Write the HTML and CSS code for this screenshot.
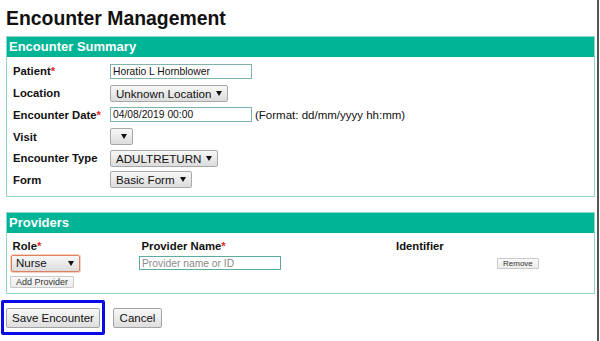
FILE: index.html
```html
<!DOCTYPE html>
<html lang="en">
<head>
<meta charset="utf-8">
<title>Encounter Management</title>
<link rel="stylesheet" href="styles.css">
</head>
<body>
<div class="page">
  <h1 class="title">Encounter Management</h1>

  <section class="panel">
    <div class="panel-head">Encounter Summary</div>
    <div class="summary-grid">
      <div class="label">Patient<span class="req">*</span></div>
      <div class="field"><input class="text-input" type="text" value="Horatio L Hornblower"></div>

      <div class="label">Location</div>
      <div class="field"><span class="select">Unknown Location<span class="caret"></span></span></div>

      <div class="label">Encounter Date<span class="req">*</span></div>
      <div class="field"><input class="text-input" type="text" value="04/08/2019 00:00"><span class="hint">(Format: dd/mm/yyyy hh:mm)</span></div>

      <div class="label">Visit</div>
      <div class="field"><span class="select"><span class="caret"></span></span></div>

      <div class="label">Encounter Type</div>
      <div class="field"><span class="select">ADULTRETURN<span class="caret"></span></span></div>

      <div class="label">Form</div>
      <div class="field"><span class="select">Basic Form<span class="caret"></span></span></div>
    </div>
  </section>

  <section class="panel">
    <div class="panel-head">Providers</div>
    <div class="prov-grid">
      <div class="prov-label l-role">Role<span class="req">*</span></div>
      <div class="prov-label l-name">Provider Name<span class="req">*</span></div>
      <div class="prov-label">Identifier</div>
      <div></div>

      <div class="r2"><span class="select select-role">Nurse<span class="caret"></span></span></div>
      <div class="r2"><input class="text-input" type="text" placeholder="Provider name or ID"></div>
      <div></div>
      <div class="r2"><button class="btn-sm" type="button">Remove</button></div>

      <div class="r3"><button class="btn-sm add" type="button">Add Provider</button></div>
    </div>
  </section>

  <div class="actions">
    <span class="focus-ring"><button class="btn" type="button">Save Encounter</button></span>
    <button class="btn cancel" type="button">Cancel</button>
  </div>
</div>
</body>
</html>
```

FILE: styles.css
```css
* { box-sizing: border-box; }

body {
  margin: 0;
  background: #fff;
  color: #111;
  font-family: "Liberation Sans", Arial, sans-serif;
}

.page {
  width: 599px;
  min-height: 341px;
  border-right: 2px solid #555;
  padding: 7px 2px 0 6px;
}

.title {
  margin: 0 0 6px;
  font-size: 19.4px;
  line-height: 23px;
  font-weight: bold;
  color: #111;
}

.panel {
  border: 1px solid #93d6c4;
}

.panel + .panel {
  margin-top: 15px;
}

.panel-head {
  height: 20px;
  line-height: 20px;
  padding-left: 2px;
  background: #00b496;
  color: #fff;
  font-weight: bold;
  font-size: 13px;
}

.summary-grid {
  display: grid;
  grid-template-columns: 97px 1fr;
  grid-auto-rows: 21.7px;
  align-items: center;
  padding: 3.6px 0 5.2px 6px;
}

.label {
  font-weight: bold;
  font-size: 11.3px;
}

.req {
  color: #e3262a;
}

.field {
  display: flex;
  align-items: center;
}

.text-input {
  width: 142px;
  height: 15px;
  margin: 0;
  padding: 0 2px;
  border: 1px solid #7fb3ad;
  background: #fff;
  color: #111;
  font: 10.3px "Liberation Sans", Arial, sans-serif;
  outline: none;
}

.prov-grid .text-input {
  height: 14px;
  border-color: #5ea9a0;
}

.text-input::placeholder {
  color: #8a8a8a;
}

.hint {
  margin-left: 3px;
  font-size: 11.5px;
}

.select {
  display: inline-flex;
  align-items: center;
  height: 17px;
  padding: 0 5px 0 5px;
  border: 1px solid #a8a8a8;
  border-radius: 2px;
  background: linear-gradient(#f7f7f7, #dcdcdc);
  color: #111;
  font-size: 11.6px;
}

.caret {
  width: 0;
  height: 0;
  margin-left: 5px;
  border-left: 3px solid transparent;
  border-right: 3px solid transparent;
  border-top: 5.5px solid #111;
}

.select-role {
  width: 69px;
  padding-left: 4px;
  justify-content: space-between;
  border-color: #e0805f;
  box-shadow: 0 0 0 1px rgba(236, 150, 120, 0.45);
  font-size: 11.5px;
}

.prov-grid {
  display: grid;
  grid-template-columns: 128px 257px 101px 1fr;
  grid-template-rows: 20px 19px 16px;
  padding: 0 0 5px 4px;
}

.prov-label {
  padding-top: 6px;
  line-height: 14px;
  font-weight: bold;
  font-size: 11.3px;
}

.l-role { padding-left: 1.5px; }
.l-name { padding-left: 2.5px; }

.r2 {
  align-self: center;
  margin-top: 2px;
  display: flex;
}

.r3 {
  align-self: end;
  display: flex;
}

.btn-sm {
  height: 11.5px;
  margin: 0;
  padding: 0 5px;
  border: 1px solid #c9c9c9;
  border-radius: 1px;
  background: linear-gradient(#fafafa, #ececec);
  color: #333;
  font: 8px/9px "Liberation Sans", Arial, sans-serif;
}

.btn-sm.add {
  height: 12px;
  margin-left: -1px;
  font-size: 9px;
  line-height: 10px;
  padding: 0 5px;
}

.actions {
  display: flex;
  align-items: center;
  margin: 6.5px 0 0 -5px;
}

.focus-ring {
  display: flex;
  padding: 4.5px 2px;
  border: 3px solid #0a0ae6;
  border-radius: 2px;
}

.btn {
  height: 20px;
  margin: 0;
  padding: 0 6px;
  border: 1px solid #a3a3a3;
  border-radius: 2px;
  background: linear-gradient(#f8f8f8, #dedede);
  color: #111;
  font: 11.5px "Liberation Sans", Arial, sans-serif;
}

.focus-ring .btn {
  width: 94px;
  padding: 0;
}

.cancel {
  width: 49px;
  padding: 0;
  margin-left: 8px;
}
```
